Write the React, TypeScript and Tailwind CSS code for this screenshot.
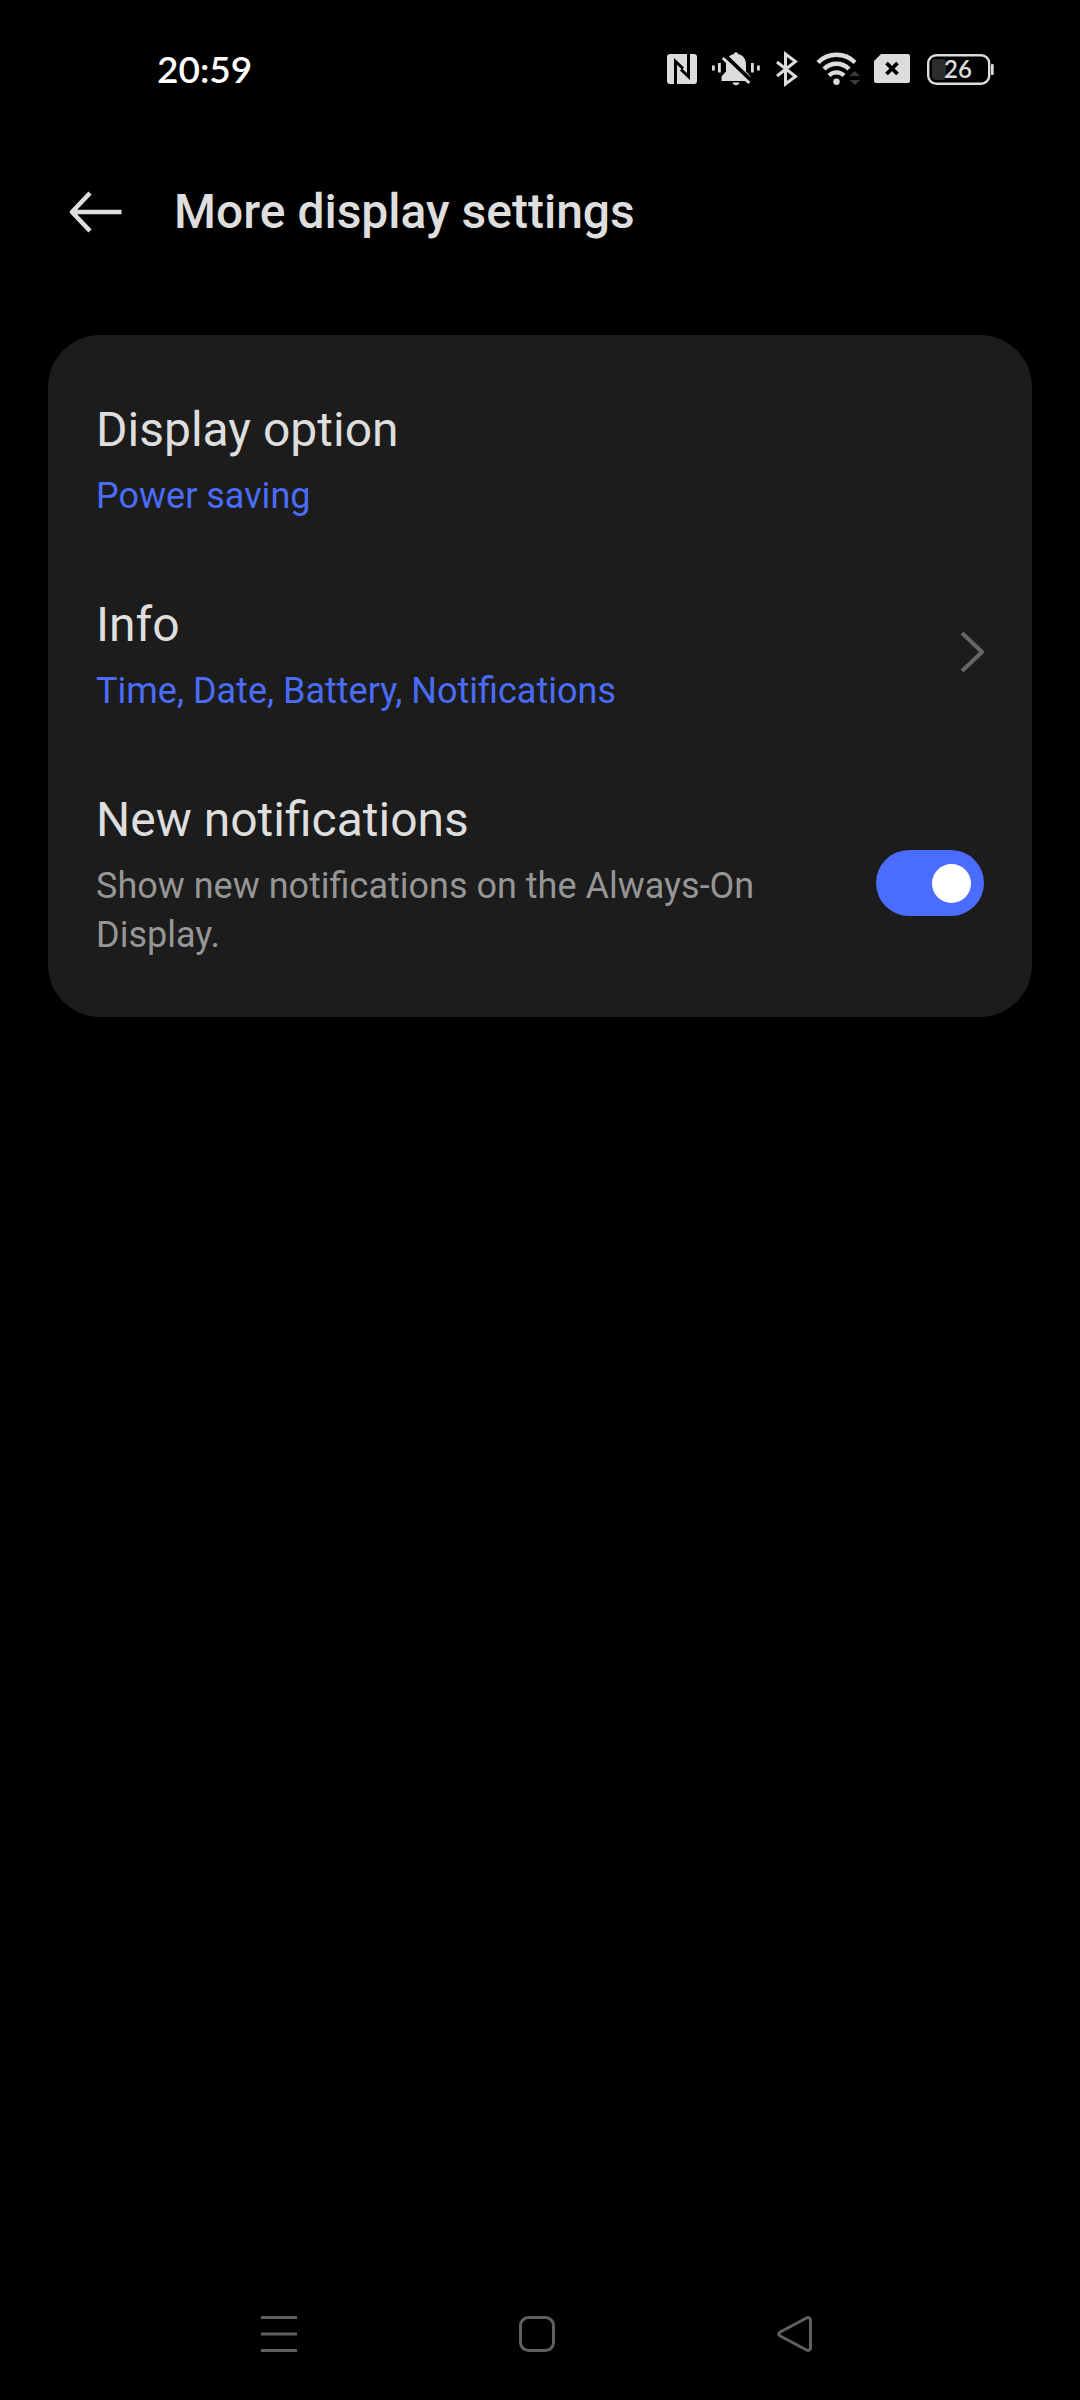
import { useState } from 'react'
import type { ReactNode } from 'react'

export default function App() {
  const [newNotifications, setNewNotifications] = useState(true)

  return (
    <div className="min-h-screen flex flex-col bg-black text-[#dedede] font-[Roboto,sans-serif]">
      <StatusBar />

      {/* Title bar */}
      <header className="h-36 flex items-center gap-[51px] pl-[69px] pr-12">
        <button type="button" aria-label="Back">
          <BackIcon />
        </button>
        <h1 className="text-5xl font-medium">More display settings</h1>
      </header>

      <main className="flex-1 px-12 pt-[51px]">
        <section className="rounded-[52px] bg-[#1c1c1c] px-12 pt-6">
          <button type="button" className="w-full flex items-center text-left">
            <RowText title="Display option">
              <span className="text-[#4a6cf7]">Power saving</span>
            </RowText>
          </button>

          <button type="button" className="w-full flex items-center gap-12 text-left">
            <RowText title="Info">
              <span className="text-[#4a6cf7]">Time, Date, Battery, Notifications</span>
            </RowText>
            <ChevronIcon />
          </button>

          <label className="flex items-center gap-12">
            <span className="flex-1 pb-6">
              <RowText title="New notifications">
                <span className="text-[#969696]">Show new notifications on the Always-On Display.</span>
              </RowText>
            </span>
            <input
              type="checkbox"
              role="switch"
              checked={newNotifications}
              onChange={(e) => setNewNotifications(e.target.checked)}
              className="appearance-none shrink-0 flex items-center w-27 h-[66px] px-[13px] rounded-full bg-[#4d4d4d] checked:bg-[#4a6cff] before:block before:size-[39px] before:rounded-full before:bg-white checked:before:ml-auto"
            />
          </label>
        </section>
      </main>

      {/* System navigation */}
      <nav className="h-33 flex items-center justify-center gap-[222px] pr-1.5 text-[#606060]">
        <button type="button" aria-label="Recent apps">
          <RecentsIcon />
        </button>
        <button type="button" aria-label="Home">
          <HomeIcon />
        </button>
        <button type="button" aria-label="Back">
          <NavBackIcon />
        </button>
      </nav>
    </div>
  )
}

function RowText({ title, children }: { title: string; children: ReactNode }) {
  return (
    <span className="flex-1 flex flex-col gap-3.5 pt-[43px] pb-[33px]">
      <span className="text-5xl leading-14">{title}</span>
      <span className="text-4xl leading-[49px]">{children}</span>
    </span>
  )
}

function StatusBar() {
  return (
    <div className="h-[138px] mb-0.5 flex items-center justify-between pl-[157px] pr-[86px]">
      <span className="text-[37px] font-semibold text-white font-[Lato,sans-serif]">20:59</span>
      <div className="flex items-center gap-3 text-[#dcdcdc]">
        <NfcIcon />
        <SilentIcon />
        <BluetoothIcon />
        <WifiIcon />
        <NoSimIcon />
        <Battery level={26} />
      </div>
    </div>
  )
}

function NfcIcon() {
  return (
    <svg width="33" height="36" viewBox="0 0 33 36" fill="none">
      <rect x="0" y="3" width="30" height="30" rx="3" fill="currentColor" />
      <path d="M8.500 33V10.500l7.500 7" stroke="#000" strokeWidth="3" />
      <path d="M21.500 3v22.500l-7.500-7" stroke="#000" strokeWidth="3" />
    </svg>
  )
}

function SilentIcon() {
  return (
    <svg width="52" height="36" viewBox="0 0 52 36" fill="currentColor">
      <path d="M24 1.200c1.200 0 2 .8 2 1.800 5 1.200 8 5 8 10v7.500l4.500 5V30H9.500v-4.500l4.500-5V13c0-5 3-8.800 8-10 0-1 .8-1.800 2-1.800z" />
      <path d="M20.500 31.500h7c-.5 1.800-1.800 2.700-3.500 2.700s-3-.9-3.500-2.700z" />
      <path d="M13 4.500l27 26" stroke="#000" strokeWidth="4" />
      <path d="M10.800 7l26.500 25" stroke="currentColor" strokeWidth="3" />
      <rect x="0" y="14.500" width="2.800" height="5" />
      <rect x="6" y="12" width="2.800" height="9.500" />
      <rect x="39" y="12" width="2.800" height="9.500" />
      <rect x="45" y="14.500" width="2.800" height="5" />
    </svg>
  )
}

function BluetoothIcon() {
  return (
    <svg width="28" height="36" viewBox="0 0 28 36" fill="none" stroke="currentColor" strokeWidth="3">
      <path d="M1 11l18.500 14.500L9.500 33V3l10 7.500L1 25" />
    </svg>
  )
}

function WifiIcon() {
  return (
    <svg width="46" height="36" viewBox="0 0 46 36" fill="none" stroke="currentColor" strokeWidth="4.400">
      <path d="M2 11.500a26 26 0 0 1 37 0" />
      <path d="M8 18a17.500 17.500 0 0 1 25 0" />
      <path d="M13 24.500a10.500 10.500 0 0 1 15 0" />
      <circle cx="20.500" cy="30.700" r="3.200" fill="currentColor" stroke="none" />
      <path d="M33 25l5.500-5 5.500 5zM33.500 29h10.500l-5.200 5z" fill="#3a3a3a" stroke="none" />
    </svg>
  )
}

function NoSimIcon() {
  return (
    <svg width="40" height="36" viewBox="0 0 40 36">
      <path d="M7 3h27a2 2 0 0 1 2 2v25a2 2 0 0 1-2 2H2a2 2 0 0 1-2-2V10z" fill="currentColor" />
      <path d="M12.500 12l11 11M23.500 12l-11 11" stroke="#000" strokeWidth="3.800" />
    </svg>
  )
}

function Battery({ level }: { level: number }) {
  return (
    <svg width="68" height="36" viewBox="0 0 68 36" fill="none">
      <rect x="2.200" y="4.200" width="61" height="28.600" rx="8" stroke="currentColor" strokeWidth="2.400" />
      <rect x="6" y="8" width={level * 0.54} height="21" rx="4" fill="#2c2c2c" />
      <rect x="65" y="13" width="2.700" height="11" rx="1" fill="currentColor" />
      <text x="32" y="27" textAnchor="middle" fill="currentColor" className="text-2xl font-semibold font-[Lato,sans-serif]">
        {level}
      </text>
    </svg>
  )
}

function BackIcon() {
  return (
    <svg width="54" height="44" viewBox="0 0 54 44" fill="none" stroke="currentColor" strokeWidth="4.500" strokeLinejoin="round">
      <path d="M21 3L3 22l18 19M3 22h49.500" />
    </svg>
  )
}

function ChevronIcon() {
  return (
    <svg width="24" height="42" viewBox="0 0 24 42" fill="none" stroke="#666" strokeWidth="4" strokeLinejoin="round">
      <path d="M2 2l20 19L2 40" />
    </svg>
  )
}

function RecentsIcon() {
  return (
    <svg width="36" height="36" viewBox="0 0 36 36" fill="none" stroke="currentColor" strokeWidth="3">
      <path d="M0 1.500h36M0 18h36M0 34.500h36" />
    </svg>
  )
}

function HomeIcon() {
  return (
    <svg width="36" height="36" viewBox="0 0 36 36" fill="none" stroke="currentColor" strokeWidth="3">
      <rect x="1.500" y="1.500" width="33" height="33" rx="8" />
    </svg>
  )
}

function NavBackIcon() {
  return (
    <svg width="36" height="36" viewBox="0 0 36 36" fill="none" stroke="currentColor" strokeWidth="3">
      <path d="M2.800 16.300L29.500 2c2-1 4 .3 4 2.400v27.200c0 2.100-2 3.400-4 2.400L2.800 19.700c-1.500-.8-1.500-2.600 0-3.400z" />
    </svg>
  )
}
